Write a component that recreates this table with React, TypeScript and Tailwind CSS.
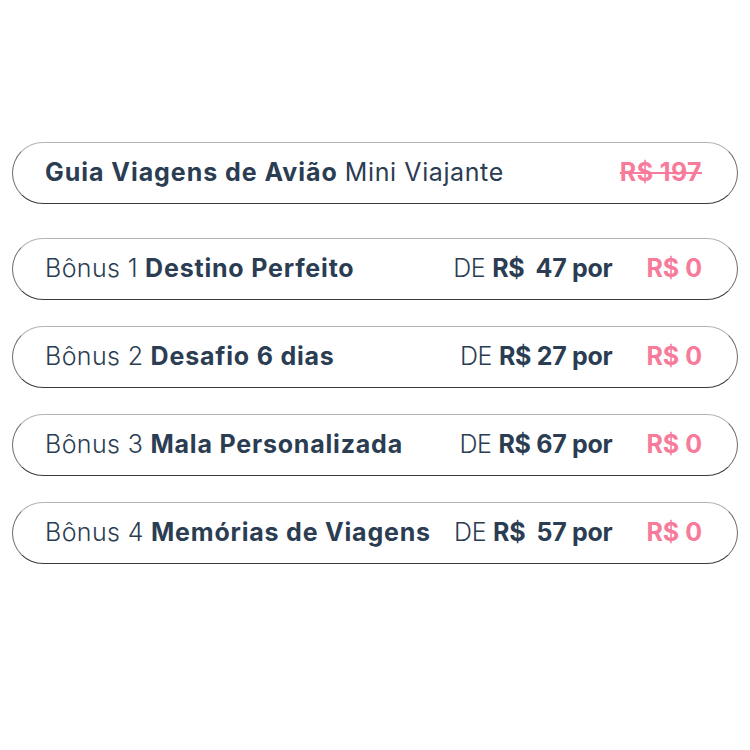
import React from "react";

const navy = "text-[#2b3d52]";
const pink = "text-[#f77b9b]";

function Pill({ children }: { children: React.ReactNode }) {
  return (
    <div className="flex h-[62px] items-center justify-between rounded-full border border-[#6b6b6b] border-t-[#b4b4b4] border-b-[#3a3a3a] pb-[1px] pl-[32px] pr-[35px]">
      {children}
    </div>
  );
}

const bonuses = [
  { n: "1", name: "Destino Perfeito", price: "R$\u00a0 47" },
  { n: "2", name: "Desafio 6 dias", price: "R$ 27" },
  { n: "3", name: "Mala Personalizada", price: "R$ 67" },
  { n: "4", name: "Memórias de Viagens", price: "R$\u00a0 57" },
];

export default function App() {
  return (
    <div
      className="min-h-[750px] w-[750px] bg-white px-[12px] pt-[142px]"
      style={{ fontFamily: "Inter, 'Noto Sans', sans-serif" }}
    >
      <div className={`flex flex-col ${navy} text-[25px]`}>
        <Pill>
          <span className="whitespace-nowrap">
            <span className="font-bold tracking-[0.95px]">Guia Viagens de Avião</span>{" "}
            <span className="font-normal tracking-[0.6px]">Mini Viajante</span>
          </span>
          <span className={`font-bold ${pink} line-through decoration-2 tracking-[0.4px]`}>R$ 197</span>
        </Pill>
        <div className="mt-[34px] flex flex-col gap-[26px]">
          {bonuses.map((b) => (
            <Pill key={b.n}>
              <span className="whitespace-nowrap">
                <span className="font-light tracking-[0.4px]">Bônus {b.n}</span>{" "}
                <span className="font-bold tracking-[0.8px]">{b.name}</span>
              </span>
              <span className="flex items-center gap-[34px] whitespace-nowrap">
                <span className="tracking-[-0.3px]">
                  <span className="font-light">DE</span>{" "}
                  <span className="font-bold">{b.price} por</span>
                </span>
                <span className={`font-bold ${pink}`}>R$ 0</span>
              </span>
            </Pill>
          ))}
        </div>
      </div>
    </div>
  );
}
